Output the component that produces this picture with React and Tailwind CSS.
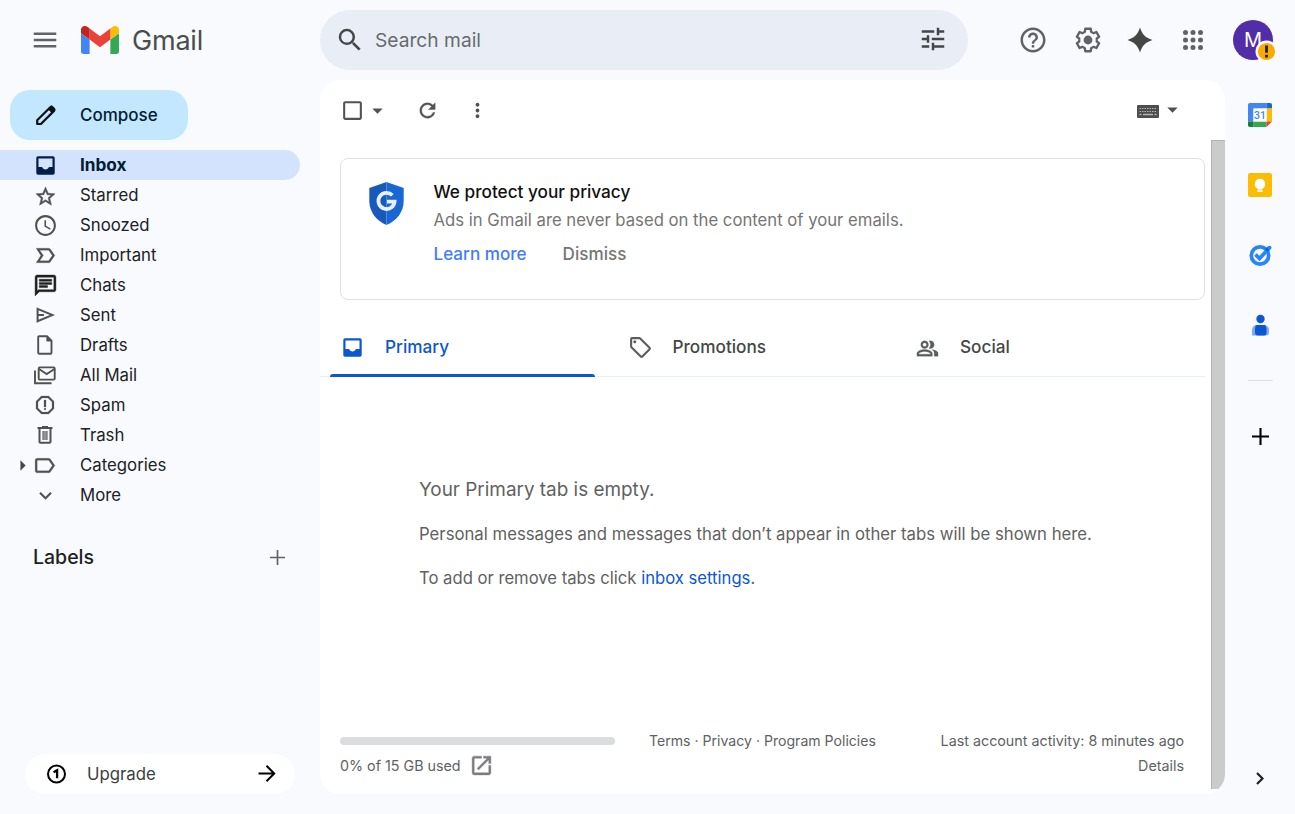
import {
  MdMenu, MdStarBorder, MdAccessTime, MdLabelImportantOutline, MdOutlineChat,
  MdOutlineReport, MdLabelOutline, MdKeyboardArrowDown,
  MdSearch, MdTune, MdHelpOutline, MdRefresh, MdMoreVert, MdArrowDropDown,
  MdArrowRight, MdOutlineLocalOffer, MdOutlinePeopleAlt, MdOpenInNew, MdCheckBoxOutlineBlank,
} from "react-icons/md";

const InboxIcon = () => (
  <svg width="25" height="25" viewBox="-3 -3 25 25" fill="currentColor">
    <path fillRule="evenodd" d="M2 .3h15Q18.700.3 18.700 2v15q0 1.700-1.700 1.700H2Q.3 18.700.3 17V2Q.3.3 2 .3ZM2.500 2.500v8.600h3.600c.5 1.500 1.900 2.500 3.400 2.500s2.900-1 3.400-2.500h3.600V2.500Z" />
  </svg>
);

const PencilIcon = () => (
  <svg width="25" height="25" viewBox="0 0 25 25" fill="none" stroke="currentColor">
    <path d="M4.200 21v-3.700L17.300 4.200q1-.9 2 0l1.700 1.700q.9 1 0 2L7.900 21Z" strokeWidth="2.200" strokeLinejoin="round" />
    <path d="m15.300 6.200 3-2.900q.6-.4 1.100 0l2.400 2.400q.4.500 0 1.100l-2.900 3Z" fill="currentColor" strokeWidth=".6" />
  </svg>
);

const DraftIcon = () => (
  <svg width="16" height="20" viewBox="0 0 16 20" fill="none" stroke="currentColor" strokeWidth="1.900">
    <path d="M2.200 1.200H10l4.500 4.500v12q0 1-1 1H2.200q-1 0-1-1V2.200q0-1 1-1Z" />
    <path d="M9.800 1.200v4.900h4.700Z" fill="currentColor" strokeWidth=".8" />
  </svg>
);

const SendIcon = () => (
  <svg width="19" height="16" viewBox="0 0 19 16" fill="none" stroke="currentColor" strokeWidth="2">
    <path d="M1.600 1.800 16.600 8 1.600 14.200ZM1.600 8H8" />
  </svg>
);

const AllMailIcon = () => (
  <svg width="22" height="19" viewBox="0 0 22 19" fill="none" stroke="currentColor" strokeWidth="1.900">
    <rect x="4.700" y="1.400" width="16" height="12.200" rx="1" />
    <path d="m5 3 7.700 5L20.400 3M1 4.600V17.200H17.600" />
  </svg>
);

const TrashIcon = () => (
  <svg width="16" height="18" viewBox="0 0 16 18" fill="none" stroke="currentColor">
    <path d="M.5 2h15M5 1h6" strokeWidth="1.900" />
    <path d="M2.500 2.500v13.200c0 .6.4 1 1 1h9c.6 0 1-.4 1-1V2.500" strokeWidth="2" />
    <path d="M6.100 5v9M8 5v9M9.900 5v9" strokeWidth="1.200" />
  </svg>
);

const Plus = ({ size, width }) => (
  <svg width={size} height={size} viewBox="0 0 16 16" fill="none" stroke="currentColor" strokeWidth={width}>
    <path d="M8 0v16M0 8h16" />
  </svg>
);

// Six-toothed gear outline: each tooth is two rim points followed by two root points.
const gearPoints = [0, 60, 120, 180, 240, 300]
  .flatMap((a) => [[a - 14, 11.6], [a + 14, 11.6], [a + 20, 8.9], [a + 40, 8.9]])
  .map(([a, r]) => {
    const t = ((a - 90) * Math.PI) / 180;
    return `${(15 + r * Math.cos(t)).toFixed(2)},${(15 + r * Math.sin(t)).toFixed(2)}`;
  })
  .join(" ");

const GearIcon = () => (
  <svg width="30" height="30" viewBox="0 0 30 30" className="ml-[25px]">
    <polygon points={gearPoints} fill="none" stroke="currentColor" strokeWidth="2.300" strokeLinejoin="round" />
    <circle cx="15" cy="15" r="4.400" fill="currentColor" />
  </svg>
);

const GmailLogo = () => (
  <svg width="38" height="28" viewBox="52 42 88 66" preserveAspectRatio="none">
    <path fill="#4285f4" d="M58 108h14V74L52 59v43c0 3.32 2.69 6 6 6" />
    <path fill="#34a853" d="M120 108h14c3.32 0 6-2.69 6-6V59l-20 15" />
    <path fill="#fbbc04" d="M120 48v26l20-15v-8c0-7.42-8.47-11.65-14.4-7.2" />
    <path fill="#ea4335" d="M72 74V48l24 18 24-18v26L96 92" />
    <path fill="#c5221f" d="M52 51v8l20 15V48l-5.6-4.2c-5.94-4.45-14.4-.22-14.4 7.2" />
  </svg>
);

const navItems = [
  { label: "Inbox", icon: <InboxIcon />, active: true },
  { label: "Starred", icon: <MdStarBorder size={23} className="mt-0.5" stroke="currentColor" strokeWidth={0.5} /> },
  { label: "Snoozed", icon: <MdAccessTime size={25} /> },
  { label: "Important", icon: <MdLabelImportantOutline size={25} stroke="currentColor" strokeWidth={0.2} /> },
  { label: "Chats", icon: <MdOutlineChat size={25} className="text-[#1f1f1f]" stroke="currentColor" strokeWidth={0.4} /> },
  { label: "Sent", icon: <SendIcon /> },
  { label: "Drafts", icon: <DraftIcon /> },
  { label: "All Mail", icon: <AllMailIcon /> },
  { label: "Spam", icon: <MdOutlineReport size={24} stroke="currentColor" strokeWidth={0.2} /> },
  { label: "Trash", icon: <TrashIcon /> },
  { label: "Categories", icon: <MdLabelOutline size={25} className="mr-px" stroke="currentColor" strokeWidth={0.2} />, expandable: true },
  { label: "More", icon: <MdKeyboardArrowDown size={25} /> },
];

function NavItem({ label, icon, active, expandable }) {
  return (
    <li className={`flex h-[30px] w-[300px] items-center rounded-r-full ${active ? "bg-[#d3e3fd] text-[17.2px] font-bold text-[#001d35]" : "text-[16.8px] text-[#202124]"}`}>
      <span className="flex w-[30px] justify-end">
        {expandable && <MdArrowRight size={25} className="-mr-[5px] text-[#444746]" />}
      </span>
      <span className={`flex w-[30px] justify-center ${active ? "text-[#041e49]" : "text-[#4f5250]"}`}>{icon}</span>
      <span className={active ? "pl-5" : "pt-0.5 pl-5"}>{label}</span>
    </li>
  );
}

function Sidebar() {
  return (
    <aside className="flex w-80 flex-col">
      <button className="mt-2.5 ml-2.5 flex h-[50px] w-[178px] items-center rounded-[20px] bg-[#c2e7ff] pl-[23px] text-[17px] font-medium text-[#001d35]">
        <span className="text-[#111]"><PencilIcon /></span>
        <span className="pt-0.5 pl-[22px]">Compose</span>
      </button>
      <ul className="mt-2.5">
        {navItems.map((item) => <NavItem key={item.label} {...item} />)}
      </ul>
      <div className="mt-[33px] flex h-[30px] w-[285px] items-center justify-between pl-[33px] text-[19.5px] font-medium text-[#1f1f1f]">
        Labels
        <span className="pb-0.5 text-[#5f6368]"><Plus size={15} width={1.8} /></span>
      </div>
      <button className="mt-auto mb-5 ml-[25px] flex h-10 w-[270px] items-center rounded-full bg-white pr-[19px] pl-[21px] text-[16.8px] text-[#3c4043]">
        <svg width="20" height="20" viewBox="0 0 20 20" fill="none" stroke="#000" strokeWidth="2">
          <circle cx="10.500" cy="10" r="8.500" />
          <path d="M7.600 8.300 11.100 6.200V14.300" strokeWidth="2.300" />
        </svg>
        <span className="flex-1 pt-0.5 pl-[21px] text-left">Upgrade</span>
        <svg width="18" height="18" viewBox="0 0 18 18" fill="none" stroke="#000" strokeWidth="2">
          <path d="M.5 8.500H16M8.500.800 16.200 8.500l-7.700 7.700" />
        </svg>
      </button>
    </aside>
  );
}

function Header() {
  return (
    <header className="flex h-20 items-center">
      <div className="flex w-80 items-center pl-[30px]">
        <MdMenu size={30} className="text-[#5f6368]" />
        <span className="pl-[21px]"><GmailLogo /></span>
        <span className="pt-px pl-[13px] text-[27px] leading-none tracking-[-0.2px] text-[#4b4d4c]">Gmail</span>
      </div>
      <div className="flex h-[60px] w-[648px] items-center rounded-full bg-[#e9eef6] pr-5 pl-[15px]">
        <MdSearch size={30} className="text-[#444746]" />
        <span className="flex-1 pl-2.5 text-[19.2px] text-[#666a6d]">Search mail</span>
        <MdTune size={30} className="mb-0.5 text-[#444746]" />
      </div>
      <div className="flex flex-1 items-center pl-[50px] text-[#5f6368]">
        <MdHelpOutline size={30} />
        <GearIcon />
        <svg width="26" height="26" viewBox="0 0 26 26" className="ml-6 text-[#444746]">
          <path fill="currentColor" d="M13 .5C15.200 7.500 18.500 10.800 25.500 13 18.500 15.200 15.200 18.500 13 25.500 10.800 18.500 7.500 15.200.5 13 7.500 10.800 10.800 7.500 13 .5Z" />
        </svg>
        <svg width="20" height="20" viewBox="0 0 20 20" className="ml-[30px]" fill="currentColor">
          {[2.5, 10, 17.5].map((y) => [2.5, 10, 17.5].map((x) => <circle key={`${x}-${y}`} cx={x} cy={y} r="2.500" />))}
        </svg>
        <div className="relative ml-[30px] flex size-10 items-center justify-center rounded-full bg-[#512da8] text-[20px] text-white">
          M
          <svg width="23" height="23" viewBox="0 0 23 23" className="absolute -right-[5px] -bottom-[3px]">
            <circle cx="11.500" cy="11.500" r="11" fill="#f8fafd" />
            <circle cx="11.500" cy="11.500" r="8.600" fill="#f9ab00" />
            <path d="M10.100 5.500h2.800v7.200h-2.800ZM10.100 14.700h2.800v2.800h-2.800Z" fill="#202124" />
          </svg>
        </div>
      </div>
    </header>
  );
}

function Toolbar() {
  return (
    <div className="flex h-[60px] items-center pt-px pl-5 text-[#505352]">
      <MdCheckBoxOutlineBlank size={25} />
      <MdArrowDropDown size={25} />
      <MdRefresh size={23} className="ml-[26px]" stroke="currentColor" strokeWidth={0.4} />
      <MdMoreVert size={23} className="ml-[27px]" />
      <svg width="22" height="13" viewBox="0 0 22 13" className="mt-0.5 ml-auto">
        <rect width="22" height="13" rx="1" fill="#4d4d4d" />
        <g stroke="#b4b4b4" fill="none">
          <path d="M2.500 3.500h17M2.500 6.500h17" strokeDasharray="1.500 1" strokeWidth="1.200" />
          <path d="M2.500 9.500h2M6 9.500h10M17.500 9.500h2" strokeWidth="1.300" />
        </g>
      </svg>
      <MdArrowDropDown size={25} className="mr-10 mb-[3px] ml-px" />
    </div>
  );
}

function PrivacyCard() {
  return (
    <section className="mt-[18px] ml-5 flex h-[142px] w-[865px] rounded-lg border border-[#dfe1e3] pt-[23px] pl-7">
      <svg width="35" height="43" viewBox="0.500 0 35 43" className="shrink-0">
        <path fill="#185abc" d="M18 0 .8 6V19C.8 30 8 39 18 43Z" />
        <path fill="#1967d2" d="M18 0 35.200 6V19C35.200 30 28 39 18 43Z" />
        <path d="M23.900 13.300A8.100 8.100 0 1 0 26.100 19.700H18.500" fill="none" stroke="#e8f0fe" strokeWidth="3.700" />
      </svg>
      <div className="-mt-1 pl-[29.5px]">
        <h2 className="text-[17.2px] leading-7 font-medium text-[#111]">We protect your privacy</h2>
        <p className="text-[16.7px] leading-7 text-[#757575]">Ads in Gmail are never based on the content of your emails.</p>
        <div className="mt-1.5 flex gap-9 text-[17.1px] leading-7 font-medium">
          <a className="text-[#427df5]">Learn more</a>
          <a className="text-[#757575]">Dismiss</a>
        </div>
      </div>
    </section>
  );
}

const tabs = [
  { label: "Primary", icon: <InboxIcon />, active: true },
  { label: "Promotions", icon: <MdOutlineLocalOffer size={25} className="text-[#5a5d5c]" /> },
  { label: "Social", icon: <MdOutlinePeopleAlt size={23} className="mx-px mt-px text-[#5a5d5c]" stroke="currentColor" strokeWidth={0.3} /> },
];

function Tabs() {
  return (
    <nav className="mt-[17px] flex h-[60px] w-[885px] border-b border-[#e9eeee] pl-2.5">
      {tabs.map((tab) => (
        <div key={tab.label} className={`relative flex w-[287.5px] items-center pl-2.5 text-[17.2px] font-medium ${tab.active ? "text-[#0b57d0]" : "text-[#444746]"}`}>
          <span className="mt-0.5">{tab.icon}</span>
          <span className="pl-5">{tab.label}</span>
          {tab.active && <span className="absolute -bottom-px left-0 h-[3px] w-[265px] rounded-t-sm bg-[#0b57d0]" />}
        </div>
      ))}
    </nav>
  );
}

function Footer() {
  return (
    <footer className="mt-auto mb-4 flex w-[864px] pl-5 text-[14.3px] leading-[25px] text-[#5e6165]">
      <div className="w-[309px]">
        <div className="flex h-[25px] items-center"><div className="h-2 w-[275px] rounded-full bg-[#dadce0]" /></div>
        <div className="flex items-center">
          0% of 15 GB used
          <MdOpenInNew size={25} className="ml-2 text-[#7b7d80]" stroke="currentColor" strokeWidth={0.4} />
        </div>
      </div>
      <div className="text-[14.1px]">Terms · Privacy · Program Policies</div>
      <div className="ml-auto text-right">
        <div>Last account activity: 8 minutes ago</div>
        <div>Details</div>
      </div>
    </footer>
  );
}

function MailPanel() {
  return (
    <main className="relative flex h-[714px] w-[905px] flex-col overflow-hidden rounded-[20px] bg-white">
      <Toolbar />
      <PrivacyCard />
      <Tabs />
      <div className="pt-[98px] pl-[99px] text-[#616161]">
        <p className="text-[18.9px] leading-[30px]">Your Primary tab is empty.</p>
        <p className="mt-[15px] text-[16.73px] leading-7">Personal messages and messages that don’t appear in other tabs will be shown here.</p>
        <p className="mt-4 text-[16.65px] leading-7">To add or remove tabs click <a className="text-[#0b57d0]">inbox settings</a>.</p>
      </div>
      <Footer />
      <div className="absolute top-[60px] right-0 h-[649px] w-3.5 border-t border-l border-[#b3b3b3] bg-[#cbcbcb]" />
    </main>
  );
}

function SidePanel() {
  return (
    <aside className="flex flex-1 flex-col items-center">
      <svg width="24" height="24" viewBox="0 0 24 24" className="mt-[23px]">
        <path fill="#4285f4" d="M1.800 0H18.500V5.500H5.500V18.500H0V1.800Q0 0 1.800 0Z" />
        <path fill="#1967d2" d="M18.500 0h3.700Q24 0 24 1.800V5.500H18.500Z" />
        <path fill="#fbbc04" d="M18.500 5.500H24v13H18.500Z" />
        <path fill="#34a853" d="M5.500 18.500h13V24h-13Z" />
        <path fill="#188038" d="M0 18.500h5.500V24H1.800Q0 24 0 22.200Z" />
        <path fill="#ea4335" d="M18.500 18.500H24L18.500 24Z" />
        <path fill="#fff" d="M5.500 5.500h13v13h-13Z" />
        <text x="12" y="16" textAnchor="middle" fontSize="10.500" fontWeight="500" fill="#4285f4" fontFamily="Roboto, sans-serif">31</text>
      </svg>
      <svg width="24" height="24" viewBox="0 0 24 24" className="mt-[46px]">
        <rect width="24" height="24" rx="2" fill="#fbbc04" />
        <path fill="#fff" d="M12 5.800a5.200 5.200 0 0 0-2.600 9.700v1h5.200v-1A5.200 5.200 0 0 0 12 5.800ZM9.400 17.300h5.200v1.800H9.400Z" />
      </svg>
      <svg width="24" height="24" viewBox="0 0 24 24" className="mt-[46px]">
        <circle cx="12" cy="12.500" r="8.700" fill="none" stroke="#2684fc" strokeWidth="3.700" />
        <path d="m7.500 11.500 4 4L21 5.300" fill="none" stroke="#2684fc" strokeWidth="3.700" />
        <path d="m17 6 2.600-2.300 2.600 2.600-2.600 2.700Z" fill="#0066da" />
        <circle cx="21.500" cy="4.700" r="2" fill="#2684fc" />
      </svg>
      <svg width="24" height="24" viewBox="0 0 24 24" className="mt-[46px]">
        <circle cx="12.500" cy="6" r="4.200" fill="#0b57d0" />
        <path fill="#7baaf7" d="M9 12h6c4 0 6 2 6 5v2.500q0 3-3 3H4V18c0-4 2-6 5-6Z" />
        <path fill="#0b57d0" d="M9 12h7.200c1.500 0 2.300 2 2.300 5v2.500q0 3-2.500 3H9.800q-2.800 0-2.800-3V16.500c0-2.500.5-4.500 2-4.500Z" />
      </svg>
      <div className="mt-[43px] h-px w-[25px] bg-[#dcdee1]" />
      <span className="mt-[47px]"><Plus size={17} width={2} /></span>
      <svg width="8" height="13" viewBox="0 0 8 13" className="mt-auto mb-[29px]" fill="none" stroke="#1f1f1f" strokeWidth="2.200">
        <path d="m1 1 5.500 5.500L1 12" />
      </svg>
    </aside>
  );
}

export default function App() {
  return (
    <div className="h-[814px] w-full overflow-hidden bg-[#f8fafd] font-[Inter,sans-serif] [&_path[d^='M0_0h24'][fill=none]]:stroke-none [&_rect[fill=none]]:stroke-none">
      <Header />
      <div className="flex h-[734px]">
        <Sidebar />
        <MailPanel />
        <SidePanel />
      </div>
    </div>
  );
}
